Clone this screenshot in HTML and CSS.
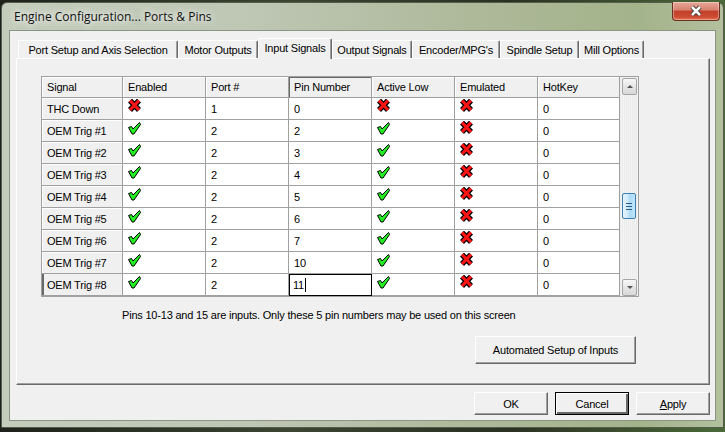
FILE: index.html
```html
<!DOCTYPE html>
<html>
<head>
    <meta charset="utf-8">
    <link rel="stylesheet" href="styles.css">
</head>
<body>
    <svg width="0" height="0" style="position:absolute">
        <symbol id="chk" viewBox="0 0 13 13">
            <polygon points="0.5,5.5 3.5,4.5 5,7 11.5,0.5 12.5,2.5 6,12 4,12" fill="#22ee22" stroke="#000" stroke-width="1" stroke-linejoin="round"/>
        </symbol>
        <symbol id="crs" viewBox="0 0 13 13">
            <path d="M2 1.5 L11 11 M11 1.5 L2 11" stroke="#000" stroke-width="5.5" fill="none"/>
            <path d="M2 1.5 L11 11 M11 1.5 L2 11" stroke="#ff1414" stroke-width="3.2" fill="none"/>
        </symbol>
    </svg>

    <div class="window">
        <div class="titlebar">Engine Configuration... Ports &amp; Pins</div>
        <div class="close">
            <svg width="16" height="12" viewBox="0 0 16 12">
                <path d="M4 2 L12 10 M12 2 L4 10" stroke="#3a3030" stroke-width="4.5" fill="none"/>
                <path d="M4 2 L12 10 M12 2 L4 10" stroke="#fff" stroke-width="2.5" fill="none"/>
            </svg>
        </div>

        <div class="client">
            <div class="tabs">
                <div class="tab" style="width:160px">Port Setup and Axis Selection</div>
                <div class="tab" style="width:80px">Motor Outputs</div>
                <div class="tab active" style="width:74px">Input Signals</div>
                <div class="tab" style="width:80px">Output Signals</div>
                <div class="tab" style="width:88px">Encoder/MPG's</div>
                <div class="tab" style="width:79px">Spindle Setup</div>
                <div class="tab" style="width:65px">Mill Options</div>
            </div>

            <div class="panel">
                <div class="grid">
                    <div class="cells">
                        <div class="cell hd">Signal</div>
                        <div class="cell hd">Enabled</div>
                        <div class="cell hd">Port #</div>
                        <div class="cell hd sel">Pin Number</div>
                        <div class="cell hd">Active Low</div>
                        <div class="cell hd">Emulated</div>
                        <div class="cell hd">HotKey</div>

                        <div class="cell rh">THC Down</div>
                        <div class="cell"><svg class="ic x"><use href="#crs"/></svg></div>
                        <div class="cell">1</div>
                        <div class="cell">0</div>
                        <div class="cell"><svg class="ic x"><use href="#crs"/></svg></div>
                        <div class="cell"><svg class="ic x"><use href="#crs"/></svg></div>
                        <div class="cell">0</div>

                        <div class="cell rh">OEM Trig #1</div>
                        <div class="cell"><svg class="ic"><use href="#chk"/></svg></div>
                        <div class="cell">2</div>
                        <div class="cell">2</div>
                        <div class="cell"><svg class="ic"><use href="#chk"/></svg></div>
                        <div class="cell"><svg class="ic x"><use href="#crs"/></svg></div>
                        <div class="cell">0</div>

                        <div class="cell rh">OEM Trig #2</div>
                        <div class="cell"><svg class="ic"><use href="#chk"/></svg></div>
                        <div class="cell">2</div>
                        <div class="cell">3</div>
                        <div class="cell"><svg class="ic"><use href="#chk"/></svg></div>
                        <div class="cell"><svg class="ic x"><use href="#crs"/></svg></div>
                        <div class="cell">0</div>

                        <div class="cell rh">OEM Trig #3</div>
                        <div class="cell"><svg class="ic"><use href="#chk"/></svg></div>
                        <div class="cell">2</div>
                        <div class="cell">4</div>
                        <div class="cell"><svg class="ic"><use href="#chk"/></svg></div>
                        <div class="cell"><svg class="ic x"><use href="#crs"/></svg></div>
                        <div class="cell">0</div>

                        <div class="cell rh">OEM Trig #4</div>
                        <div class="cell"><svg class="ic"><use href="#chk"/></svg></div>
                        <div class="cell">2</div>
                        <div class="cell">5</div>
                        <div class="cell"><svg class="ic"><use href="#chk"/></svg></div>
                        <div class="cell"><svg class="ic x"><use href="#crs"/></svg></div>
                        <div class="cell">0</div>

                        <div class="cell rh">OEM Trig #5</div>
                        <div class="cell"><svg class="ic"><use href="#chk"/></svg></div>
                        <div class="cell">2</div>
                        <div class="cell">6</div>
                        <div class="cell"><svg class="ic"><use href="#chk"/></svg></div>
                        <div class="cell"><svg class="ic x"><use href="#crs"/></svg></div>
                        <div class="cell">0</div>

                        <div class="cell rh">OEM Trig #6</div>
                        <div class="cell"><svg class="ic"><use href="#chk"/></svg></div>
                        <div class="cell">2</div>
                        <div class="cell">7</div>
                        <div class="cell"><svg class="ic"><use href="#chk"/></svg></div>
                        <div class="cell"><svg class="ic x"><use href="#crs"/></svg></div>
                        <div class="cell">0</div>

                        <div class="cell rh">OEM Trig #7</div>
                        <div class="cell"><svg class="ic"><use href="#chk"/></svg></div>
                        <div class="cell">2</div>
                        <div class="cell">10</div>
                        <div class="cell"><svg class="ic"><use href="#chk"/></svg></div>
                        <div class="cell"><svg class="ic x"><use href="#crs"/></svg></div>
                        <div class="cell">0</div>

                        <div class="cell rh cur">OEM Trig #8</div>
                        <div class="cell"><svg class="ic"><use href="#chk"/></svg></div>
                        <div class="cell">2</div>
                        <div class="cell edit">11<span class="caret"></span></div>
                        <div class="cell"><svg class="ic"><use href="#chk"/></svg></div>
                        <div class="cell"><svg class="ic x"><use href="#crs"/></svg></div>
                        <div class="cell">0</div>
                    </div>
                    <div class="scrollbar">
                        <div class="sbtn"><span class="arr up"></span></div>
                        <div class="track"><div class="thumb"><span class="grip"></span></div></div>
                        <div class="sbtn"><span class="arr down"></span></div>
                    </div>
                </div>

                <div class="note">Pins 10-13 and 15 are inputs. Only these 5 pin numbers may be used on this screen</div>
                <button class="btn auto">Automated Setup of Inputs</button>
            </div>

            <div class="actions">
                <button class="btn">OK</button>
                <button class="btn default">Cancel</button>
                <button class="btn"><u>A</u>pply</button>
            </div>
        </div>
    </div>
</body>
</html>
```

FILE: styles.css
```css
* {
    box-sizing: border-box;
}

body {
    margin: 0;
    width: 725px;
    height: 432px;
    overflow: hidden;
    background: linear-gradient(90deg, #1e221a 0%, #3c4432 40%, #2a3022 70%, #4a6a38 100%);
    font-family: "Liberation Sans", Arial, sans-serif;
    font-size: 11px;
    letter-spacing: -0.2px;
    color: #000;
}

.window {
    position: relative;
    margin: 2px 0 0 1px;
    width: 723px;
    height: 426px;
    border: 1px solid #555d4c;
    border-radius: 6px 6px 0 0;
    background: linear-gradient(90deg, #c4ccbc 0%, #bec6b4 35%, #aeb99a 65%, #a3b38a 88%, #b2c09e 100%);
    padding: 0 7px 6px 7px;
    display: flex;
    flex-direction: column;
}

.titlebar {
    height: 27px;
    display: flex;
    align-items: center;
    padding-left: 5px;
    font-family: "Open Sans", "Noto Sans", sans-serif;
    font-size: 12px;
    letter-spacing: 0;
    color: #111;
    text-shadow: 0 0 6px #fff, 0 0 10px rgba(255,255,255,0.8);
}

.close {
    position: absolute;
    top: -1px;
    left: 670px;
    width: 48px;
    height: 19px;
    border: 1px solid #6b2e20;
    border-top: none;
    border-radius: 0 0 4px 4px;
    background: linear-gradient(#e4a898 0%, #d88070 45%, #c2412a 50%, #cc4a30 80%, #e07050 100%);
    box-shadow: inset 0 0 0 1px rgba(255,255,255,0.35);
    display: flex;
    align-items: center;
    justify-content: center;
}

.client {
    flex: 1;
    display: flex;
    flex-direction: column;
    background: #f0f0f0;
    border: 1px solid #8c9484;
    padding: 7px 5px 0 6px;
}

.tabs {
    display: flex;
    align-items: flex-end;
    height: 20px;
    padding-left: 2px;
    position: relative;
    z-index: 1;
}

.tab {
    height: 18px;
    display: flex;
    align-items: center;
    justify-content: center;
    white-space: nowrap;
    background: #f0f0f0;
    border-top: 1px solid #fff;
    border-left: 1px solid #fff;
    border-right: 1px solid #696969;
    box-shadow: inset -1px 0 #a0a0a0;
    border-radius: 2px 2px 0 0;
    padding-top: 1px;
}

.tab.active {
    height: 21px;
    margin-bottom: -1px;
    padding-top: 0;
    padding-bottom: 2px;
}

.panel {
    height: 327px;
    border: 1px solid;
    border-color: #fff #696969 #696969 #fff;
    box-shadow: inset -1px -1px #a0a0a0;
    padding: 17px 0 0 24px;
}

.grid {
    width: 598px;
    height: 221px;
    border: 1px solid #a0a0a0;
    background: #fff;
    display: flex;
}

.cells {
    width: 578px;
    display: grid;
    grid-template-columns: 81px 83px 83px 83px 83px 83px 82px;
    grid-template-rows: 21px;
    grid-auto-rows: 22px;
}

.cell {
    border-right: 1px solid #a0a0a0;
    border-bottom: 1px solid #a0a0a0;
    padding: 1px 0 0 5px;
    line-height: 21px;
    white-space: nowrap;
    overflow: hidden;
}

.hd {
    background: #f0f0f0;
    box-shadow: inset 1px 1px #fff;
    padding-top: 0;
}

.hd.sel {
    box-shadow: inset 1px 1px #696969;
}

.rh {
    background: #f0f0f0;
    box-shadow: inset 1px 1px #fff;
}

.rh.cur {
    box-shadow: inset 2px 0 #696969;
}

.edit {
    outline: 1px solid #000;
    outline-offset: -1px;
    padding-left: 4px;
}

.caret {
    display: inline-block;
    width: 1px;
    height: 14px;
    background: #000;
    vertical-align: -3px;
    margin-left: 1px;
}

.ic {
    display: block;
    width: 13px;
    height: 13px;
    margin-top: 1px;
}

.ic.x {
    margin-top: 0;
}

.scrollbar {
    width: 18px;
    padding: 1px 0 0 2px;
    display: flex;
    flex-direction: column;
    background: repeating-linear-gradient(90deg, #ebebeb 0, #ebebeb 1px, #f4f4f4 1px, #f4f4f4 2px);
}

.sbtn {
    width: 15px;
    height: 17px;
    border: 1px solid #a4a4a4;
    border-radius: 2px;
    background: linear-gradient(#f8f8f8, #e6e6e6 50%, #d8d8d8);
    display: flex;
    align-items: center;
    justify-content: center;
}

.arr {
    width: 0;
    height: 0;
    border-left: 3px solid transparent;
    border-right: 3px solid transparent;
}

.arr.up {
    border-bottom: 3px solid #555;
}

.arr.down {
    border-top: 3px solid #555;
}

.track {
    flex: 1;
}

.thumb {
    width: 14px;
    height: 26px;
    margin-top: 98px;
    border: 1px solid #3c7fb1;
    border-radius: 2px;
    background: linear-gradient(90deg, #e4f4fc 0%, #cbe8f8 45%, #a9dbf6 50%, #bfe3f8 100%);
    display: flex;
    align-items: center;
    justify-content: center;
}

.grip {
    width: 6px;
    height: 7px;
    background: repeating-linear-gradient(#2c5c84 0, #2c5c84 1px, transparent 1px, transparent 3px);
}

.note {
    margin: 12px 0 0 81px;
    line-height: 13px;
}

.btn {
    display: block;
    font-family: inherit;
    font-size: 11px;
    letter-spacing: inherit;
    color: #000;
    background: #f0f0f0;
    border: 1px solid;
    border-color: #fff #696969 #696969 #fff;
    box-shadow: inset -1px -1px #a0a0a0;
    padding: 0;
}

.btn.auto {
    width: 161px;
    height: 28px;
    margin: 14px 0 0 434px;
}

.actions {
    display: flex;
    justify-content: flex-end;
    gap: 7px;
    margin-top: 7px;
}

.actions .btn {
    width: 74px;
    height: 23px;
}

.btn.default {
    outline: 1px solid #000;
    outline-offset: -1px;
    box-shadow: inset 1px 1px #fff, inset -2px -2px #696969;
}
```
